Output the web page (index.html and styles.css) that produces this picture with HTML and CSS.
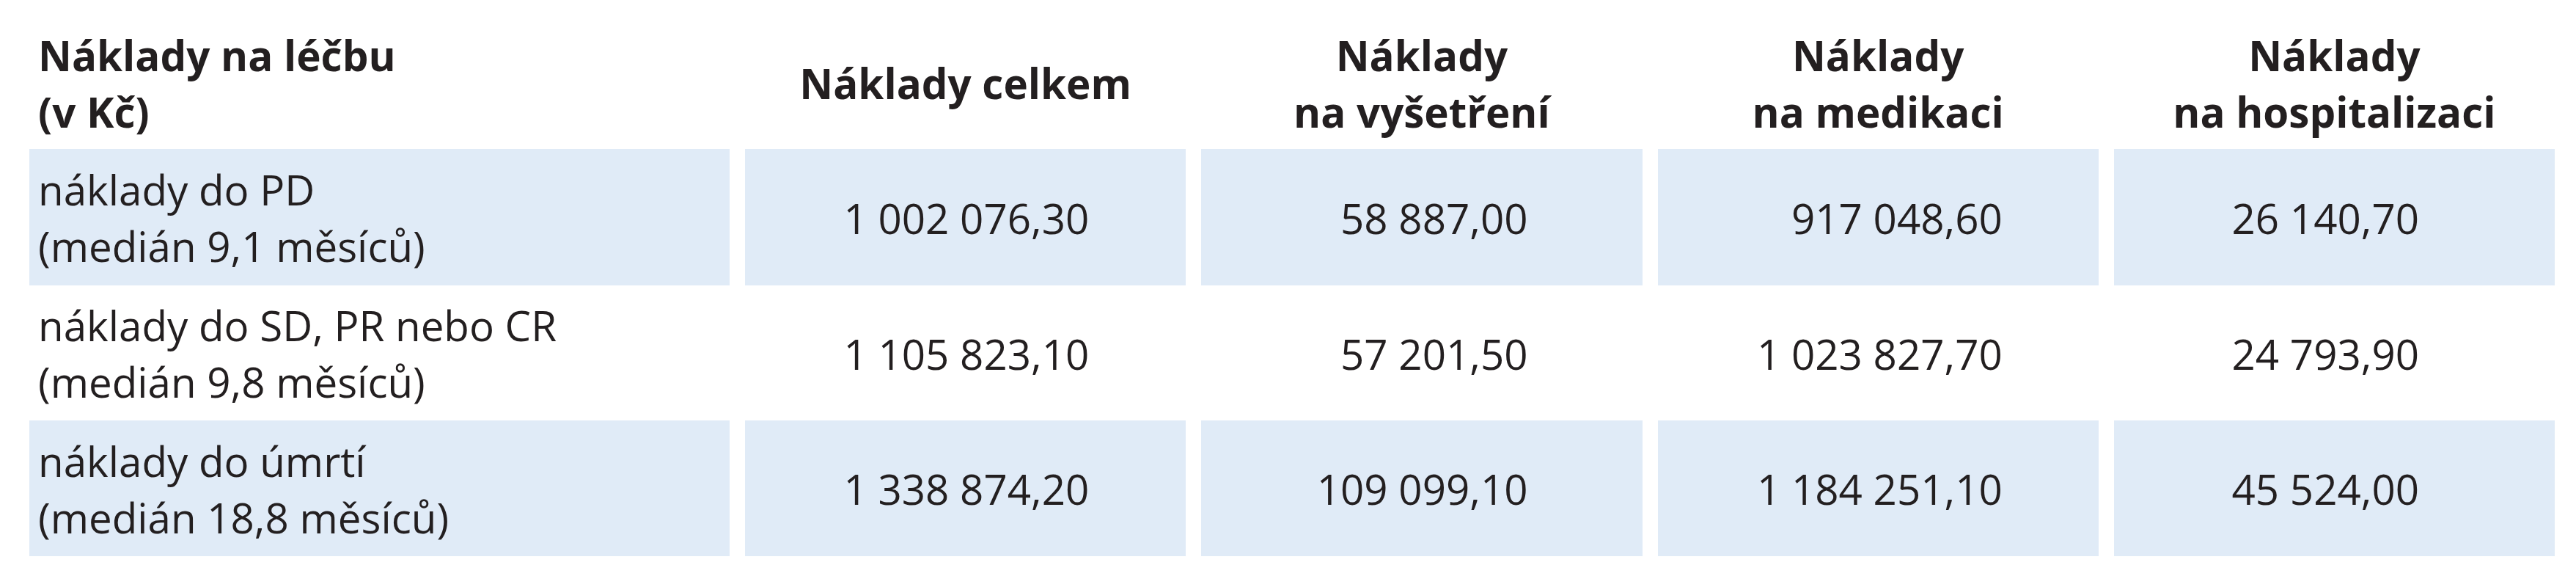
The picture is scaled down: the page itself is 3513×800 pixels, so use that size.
FILE: index.html
```html
<!DOCTYPE html>
<html lang="cs">
<head>
<meta charset="utf-8">
<title>Náklady na léčbu</title>
<link rel="stylesheet" href="styles.css">
</head>
<body>
<table class="costs">
  <colgroup>
    <col class="col-label">
    <col><col><col><col>
  </colgroup>
  <thead>
    <tr>
      <th class="label">Náklady na léčbu<br>(v Kč)</th>
      <th>Náklady celkem</th>
      <th>Náklady<br>na vyšetření</th>
      <th>Náklady<br>na medikaci</th>
      <th>Náklady<br>na hospitalizaci</th>
    </tr>
  </thead>
  <tbody>
    <tr class="shaded r1">
      <td class="label">náklady do PD<br>(medián 9,1 měsíců)</td>
      <td class="num c2">1 002 076,30</td>
      <td class="num c3">58 887,00</td>
      <td class="num c4">917 048,60</td>
      <td class="num c5">26 140,70</td>
    </tr>
    <tr class="r2">
      <td class="label">náklady do SD, PR nebo CR<br>(medián 9,8 měsíců)</td>
      <td class="num c2">1 105 823,10</td>
      <td class="num c3">57 201,50</td>
      <td class="num c4">1 023 827,70</td>
      <td class="num c5">24 793,90</td>
    </tr>
    <tr class="shaded r3">
      <td class="label">náklady do úmrtí<br>(medián 18,8 měsíců)</td>
      <td class="num c2">1 338 874,20</td>
      <td class="num c3">109 099,10</td>
      <td class="num c4">1 184 251,10</td>
      <td class="num c5">45 524,00</td>
    </tr>
  </tbody>
</table>
</body>
</html>
```

FILE: styles.css
```css
html, body {
  margin: 0;
  padding: 0;
  background: #ffffff;
}

body {
  font-family: "Open Sans", "Noto Sans", "Liberation Sans", sans-serif;
  font-size: 56.5px;
  line-height: 77px;
  color: #231f20;
}

.costs {
  table-layout: fixed;
  border-collapse: separate;
  border-spacing: 21px 0;
  width: 3486px;
  margin: 0 0 0 19px;
}

.col-label {
  width: 955px;
}

.costs th {
  font-weight: 700;
  text-align: center;
  vertical-align: middle;
  padding: 24px 0 0 0;
  white-space: nowrap;
}

.costs thead tr {
  height: 203px;
}

.costs th.label,
.costs td.label {
  text-align: left;
  padding-left: 12px;
}

.costs td {
  vertical-align: middle;
  padding: 2px 0 0 0;
  white-space: nowrap;
  font-weight: 400;
}

.r1 { height: 186px; }
.r2 { height: 184px; }
.r3 { height: 185px; }

.shaded td {
  background: #e0ebf7;
}

.costs td.num {
  text-align: right;
}

.costs td.c2 { padding-right: 132px; }
.costs td.c3 { padding-right: 156px; }
.costs td.c4 { padding-right: 131px; }
.costs td.c5 { padding-right: 185px; }
```
